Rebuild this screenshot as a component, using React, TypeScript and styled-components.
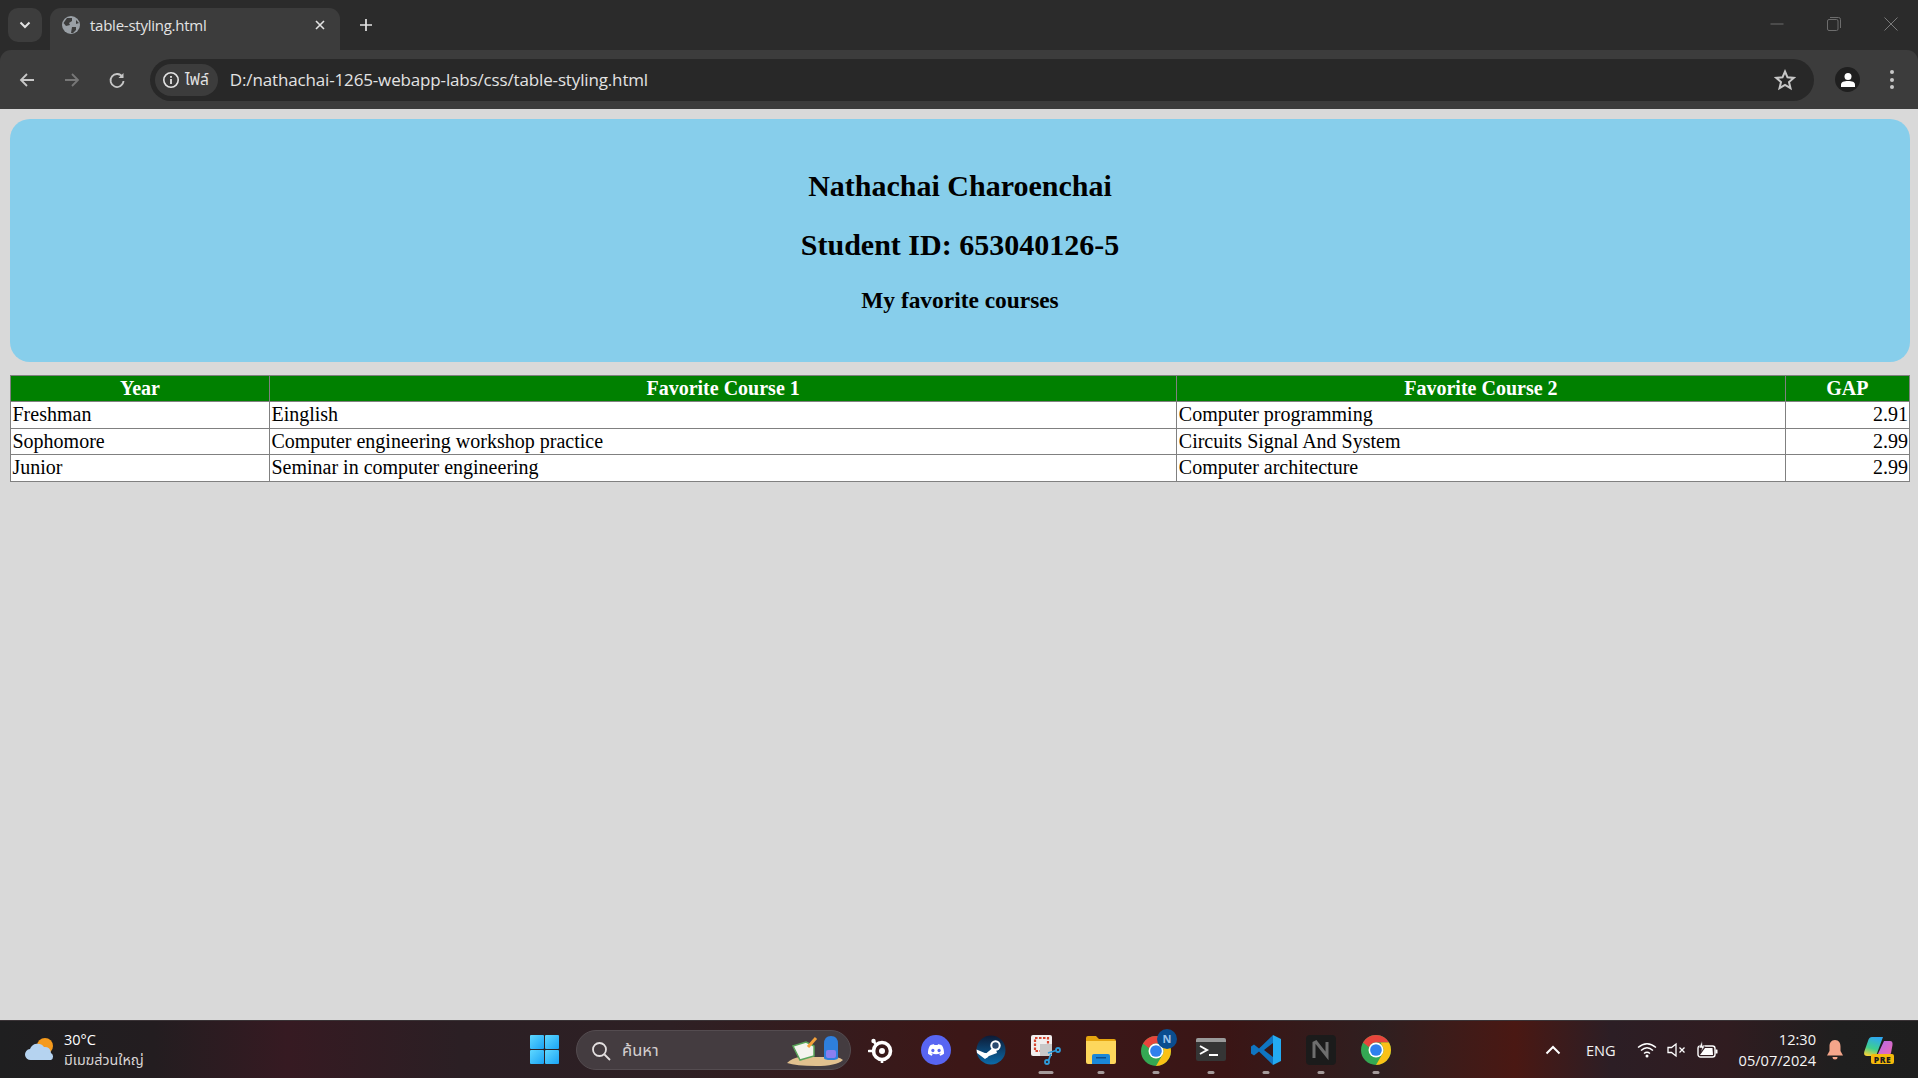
import React from "react";
import styled, { createGlobalStyle } from "styled-components";

const Global = createGlobalStyle`
  html, body { margin: 0; padding: 0; height: 100%; background: #d9d9d9; overflow: hidden; }
  #root { height: 100%; }
`;

const UI_FONT = `"Open Sans", "Noto Sans", "Noto Sans Thai", "DejaVu Sans", sans-serif`;

const Screen = styled.div`
  width: 1918px;
  height: 1078px;
  display: flex;
  flex-direction: column;
  font-family: ${UI_FONT};
  background: #2b2b2b;
`;

/* ---- browser chrome ---- */
const TabStrip = styled.div`
  height: 50px;
  flex: none;
  background: #2b2b2b;
  display: flex;
  align-items: flex-end;
  padding-left: 8px;
`;
const TabSearch = styled.div`
  width: 34px;
  height: 34px;
  margin-bottom: 8px;
  border-radius: 10px;
  background: #3d3d3d;
  display: flex;
  align-items: center;
  justify-content: center;
  flex: none;
`;
const Tab = styled.div`
  width: 290px;
  height: 42px;
  margin-left: 8px;
  background: #3c3c3c;
  border-radius: 11px 11px 0 0;
  display: flex;
  align-items: center;
  padding: 0 14px 8px 11px;
  box-sizing: border-box;
  color: #e3e3e3;
  font-size: 15px;
  letter-spacing: -0.25px;
  flex: none;
`;
const TabTitle = styled.span`
  margin-left: 9px;
  flex: 1;
`;
const NewTab = styled.div`
  margin: 0 0 9px 10px;
  height: 32px;
  width: 32px;
  display: flex;
  align-items: center;
  justify-content: center;
`;
const WindowControls = styled.div`
  margin-left: auto;
  align-self: flex-start;
  display: flex;
  align-items: center;
  height: 48px;
  padding-right: 20px;
  gap: 43px;
`;
const Toolbar = styled.div`
  height: 59px;
  flex: none;
  background: #3c3c3c;
  border-radius: 11px 11px 0 0;
  display: flex;
  align-items: center;
  padding: 0 0 0 16px;
  box-sizing: border-box;
`;
const NavGroup = styled.div`
  display: flex;
  gap: 23px;
  flex: none;
`;
const NavButton = styled.div`
  width: 22px;
  height: 22px;
  display: flex;
  align-items: center;
  justify-content: center;
  flex: none;
`;
const Omnibox = styled.div`
  margin: 0 0 0 22px;
  width: 1664px;
  height: 42px;
  flex: none;
  border-radius: 21px;
  background: #282828;
  display: flex;
  align-items: center;
  padding: 0 18px 0 5px;
  box-sizing: border-box;
`;
const SiteChip = styled.div`
  height: 32px;
  padding: 0 9px 0 7px;
  border-radius: 16px;
  background: #3c3c3c;
  display: flex;
  align-items: center;
  gap: 5px;
  color: #e3e3e3;
  font-size: 15.5px;
  flex: none;
`;
const Url = styled.div`
  margin-left: 12px;
  flex: 1;
  color: #e3e3e3;
  font-size: 17px;
  letter-spacing: -0.15px;
`;
const Avatar = styled.div`
  width: 25px;
  height: 25px;
  margin-left: 21px;
  border-radius: 50%;
  background: #1f1f1f;
  display: flex;
  align-items: center;
  justify-content: center;
  flex: none;
`;
const MenuDots = styled.div`
  margin-left: 30px;
  display: flex;
  flex-direction: column;
  gap: 3.5px;
  flex: none;
  i { width: 4px; height: 4px; border-radius: 50%; background: #c7c7c7; display: block; }
`;

/* ---- page ---- */
const Page = styled.main`
  flex: 1;
  background: #d9d9d9;
  padding: 10px 8px 0 10px;
  font-family: "Liberation Serif", "Times New Roman", serif;
  color: #000;
  min-height: 0;
`;
const Banner = styled.header`
  height: 243px;
  background: #87ceeb;
  border-radius: 20px;
  display: flex;
  flex-direction: column;
  align-items: center;
  margin-bottom: 13px;
`;
const Name = styled.h1<{ $top: number }>`
  margin: ${(p) => p.$top}px 0 0;
  font-size: 30px;
  line-height: 34px;
  font-weight: 700;
`;
const Sub = styled.h2`
  margin: 25px 0 0;
  font-size: 23.4px;
  line-height: 26px;
  font-weight: 700;
`;
const Table = styled.table`
  width: 100%;
  border-collapse: collapse;
  table-layout: fixed;
  font-size: 20px;
  background: #fff;
  border: 1px solid #808080;
`;
const Th = styled.th<{ $w: number }>`
  width: ${(p) => p.$w}px;
  background: #008000;
  color: #fff;
  border: 1px solid #808080;
  padding: 1px;
  height: 23px;
  line-height: 23px;
  font-weight: 700;
  box-sizing: content-box;
`;
const Tr = styled.tr`
  &:nth-child(odd) { height: 27px; }
  &:nth-child(even) { height: 26px; }
  &:nth-child(odd) td { vertical-align: top; }
`;
const Td = styled.td<{ $num?: boolean }>`
  border: 1px solid #808080;
  padding: 1px 1px 1px 1.5px;
  line-height: 23px;
  text-align: ${(p) => (p.$num ? "right" : "left")};
`;

/* ---- taskbar ---- */
const Taskbar = styled.footer`
  height: 58px;
  flex: none;
  border-top: 1px solid #3a3336;
  box-sizing: border-box;
  background: linear-gradient(90deg, #1f1f20 0%, #231d20 8%, #361a22 15%, #2b1f24 24%, #2e2024 35%, #3c1717 50%, #3a1718 58%, #3a1515 64%, #2f1f20 72%, #4a1813 79%, #2c1e25 84%, #301c20 90%, #1f1f1f 96%, #1e1e1e 100%);
  display: flex;
  align-items: center;
  color: #fff;
`;
const Weather = styled.div`
  width: 495px;
  flex: none;
  padding-left: 24px;
  box-sizing: border-box;
  display: flex;
  align-items: center;
  gap: 8px;
`;
const WeatherText = styled.div`
  font-size: 14.5px;
  line-height: 21px;
  color: #fff;
  small { display: block; font-size: 14.3px; color: #d8d4d4; line-height: 20px; }
`;
const StartIcon = styled.div`
  width: 29px;
  height: 29px;
  margin-left: 35px;
  display: grid;
  grid-template-columns: 1fr 1fr;
  gap: 1px;
  flex: none;
  i { display: block; background: linear-gradient(135deg, #5fd8ff, #1aa3f5); border-radius: 1px; }
`;
const SearchBox = styled.div`
  margin-left: 17px;
  width: 275px;
  height: 40px;
  flex: none;
  border-radius: 20px;
  background: #443c40;
  border: 1px solid #544c50;
  box-sizing: border-box;
  display: flex;
  align-items: center;
  padding: 2px 0 0 14px;
  color: #d5d0d0;
  font-size: 16.5px;
  gap: 11px;
  position: relative;
`;
const SearchArt = styled.svg`
  position: absolute;
  right: 6px;
  bottom: 2px;
`;
const Apps = styled.div`
  display: flex;
  margin-left: 2px;
  flex: none;
`;
const AppSlot = styled.div`
  width: 55px;
  height: 57px;
  display: flex;
  align-items: center;
  justify-content: center;
  position: relative;
  flex: none;
`;
const Running = styled.span<{ $wide?: boolean }>`
  position: absolute;
  bottom: 4px;
  left: 50%;
  transform: translateX(-50%);
  width: ${(p) => (p.$wide ? 15 : 7)}px;
  height: 3px;
  border-radius: 2px;
  background: #a49a9a;
`;
const Tray = styled.div`
  margin-left: 142px;
  display: flex;
  align-items: center;
  flex: none;
`;
const Lang = styled.span`
  margin-left: 25px;
  font-size: 14.6px;
  color: #f2f2f2;
  width: 41px;
`;
const TrayIcons = styled.div`
  margin-left: 10px;
  display: flex;
  align-items: center;
  gap: 10px;
`;
const Clock = styled.div`
  width: 97px;
  text-align: right;
  font-size: 14.6px;
  line-height: 21px;
  color: #f5f5f5;
`;
const BellWrap = styled.div`
  margin-left: 11px;
  display: flex;
`;
const CopilotWrap = styled.div`
  margin-left: 21px;
  display: flex;
`;

const GlobeIcon = () => (
  <svg width="20" height="20" viewBox="0 0 20 20">
    <circle cx="10" cy="10" r="9" fill="#9aa0a6" />
    <path d="M6 3 L11 3 L11 6 L8 8 L9 10 L5 11 L2.5 8 Z M11 12 L15 12 L15 15 L12 18 L10 18 Z M15 5 L18 8 L15 9 Z" fill="#3c3c3c" />
  </svg>
);

const ChromeArt = () => (
  <>
    <circle cx="24" cy="24" r="20" fill="#34a853" />
    <path d="M24 4a20 20 0 0 1 17.320 10H24a10 10 0 0 0-9.300 6.300L6.680 14A20 20 0 0 1 24 4z" fill="#e8453c" />
    <path d="M41.320 14A20 20 0 0 1 24 44l8.660-15A10 10 0 0 0 32.660 19L30 14z" fill="#fbc116" />
    <circle cx="24" cy="24" r="10" fill="#fff" />
    <circle cx="24" cy="24" r="7.800" fill="#2f80ed" />
  </>
);

const apps: { key: string; node: React.ReactNode; run?: boolean; wide?: boolean }[] = [
  {
    key: "steelseries",
    node: (
      <svg width="26" height="26" viewBox="0 0 26 26">
        <circle cx="14" cy="14" r="8.500" fill="none" stroke="#fff" strokeWidth="3.600" />
        <circle cx="14" cy="14" r="3" fill="#fff" />
        <circle cx="5.500" cy="4" r="2.200" fill="#fff" />
        <path d="M5.500 4 L9 9" stroke="#fff" strokeWidth="2.400" />
        <path d="M1 14 H6 M14 23 V26" stroke="#fff" strokeWidth="2.600" strokeLinecap="round" />
      </svg>
    ),
  },
  {
    key: "discord",
    node: (
      <svg width="30" height="30" viewBox="0 0 30 30">
        <circle cx="15" cy="15" r="15" fill="#5865f2" />
        <path d="M9 10.500c2-1 3.500-1.200 4-1.200l.4.800a10 10 0 0 1 3.200 0l.4-.800c.5 0 2 .2 4 1.200 1.400 2.400 2.200 5.200 2 8.200-1.300 1-2.600 1.600-3.800 2l-.9-1.400c.5-.2 1-.4 1.400-.7l-.3-.3c-2.700 1.200-5.900 1.200-8.800 0l-.3.300c.4.300.9.500 1.400.7l-.9 1.400c-1.200-.4-2.500-1-3.800-2-.2-3 .6-5.800 2-8.200z" fill="#fff" />
        <ellipse cx="11.900" cy="15.500" rx="1.600" ry="1.800" fill="#5865f2" />
        <ellipse cx="18.100" cy="15.500" rx="1.600" ry="1.800" fill="#5865f2" />
      </svg>
    ),
  },
  {
    key: "steam",
    node: (
      <svg width="30" height="30" viewBox="0 0 30 30">
        <defs>
          <linearGradient id="steamG" x1="0" y1="0" x2="0" y2="1">
            <stop offset="0" stopColor="#0d1b36" />
            <stop offset="1" stopColor="#0b6aa8" />
          </linearGradient>
        </defs>
        <circle cx="15" cy="15" r="14.500" fill="url(#steamG)" />
        <path d="M0.500 14.500 L10 18.500 L13 16 L19 11 L21 18 L13 21 L9 24 L1 18 Z" fill="#fff" />
        <circle cx="19.500" cy="10.500" r="5.200" fill="#fff" />
        <circle cx="19.500" cy="10.500" r="3.200" fill="#2a4a6f" />
        <circle cx="9.500" cy="20.500" r="2.500" fill="#fff" />
      </svg>
    ),
  },
  {
    key: "snip",
    run: true,
    wide: true,
    node: (
      <svg width="32" height="32" viewBox="0 0 32 32">
        <rect x="1" y="1" width="21" height="21" rx="2" fill="#f1efef" />
        <rect x="5" y="4" width="13" height="13" fill="none" stroke="#d6452f" strokeWidth="2.200" strokeDasharray="2.500 1.500" />
        <rect x="10" y="10" width="12" height="12" fill="#c8c8c8" />
        <circle cx="28" cy="16" r="2" fill="none" stroke="#2d9cdb" strokeWidth="1.800" />
        <circle cx="17" cy="28" r="2" fill="none" stroke="#2d9cdb" strokeWidth="1.800" />
        <path d="M18.500 26.500 L21 20 M26 16.500 L18 19" stroke="#2d9cdb" strokeWidth="1.800" />
      </svg>
    ),
  },
  {
    key: "files",
    run: true,
    node: (
      <svg width="30" height="28" viewBox="0 0 30 28">
        <path d="M0 2a2 2 0 0 1 2-2h8l3 3h15a2 2 0 0 1 2 2v3H0z" fill="#e5a50f" />
        <path d="M0 5h30v21a2 2 0 0 1-2 2H2a2 2 0 0 1-2-2z" fill="#fdd75c" />
        <path d="M6 28v-8a2 2 0 0 1 2-2h14a2 2 0 0 1 2 2v8z" fill="#1b88d8" />
        <rect x="10" y="21" width="10" height="1.500" fill="#0d4f8c" />
      </svg>
    ),
  },
  {
    key: "chrome-n",
    run: true,
    node: (
      <svg width="36" height="38" viewBox="0 0 36 38" style={{ overflow: "visible", marginTop: -6 }}>
        <svg x="3" y="8" width="30" height="30" viewBox="4 4 40 40">
          <ChromeArt />
        </svg>
        <circle cx="29" cy="11" r="10" fill="#0a4d8f" />
        <text x="29" y="15" textAnchor="middle" fontSize="11" fontWeight="700" fill="#9cc3ea" fontFamily="Open Sans, sans-serif">N</text>
      </svg>
    ),
  },
  {
    key: "terminal",
    run: true,
    node: (
      <svg width="30" height="23" viewBox="0 0 30 23">
        <rect width="30" height="23" rx="2" fill="#353535" />
        <path d="M0 2a2 2 0 0 1 2-2h26a2 2 0 0 1 2 2v2H0z" fill="#9a9a9a" />
        <path d="M4 8 L11 12 L4 16" fill="none" stroke="#fff" strokeWidth="2" />
        <rect x="13" y="16" width="9" height="2" fill="#fff" />
      </svg>
    ),
  },
  {
    key: "vscode",
    run: true,
    node: (
      <svg width="30" height="30" viewBox="0 0 30 30">
        <path d="M22 0 L30 4 V26 L22 30 Z" fill="#23aaf2" />
        <path d="M22 8 L13 15 L22 22 V30 L8 16.500 L3 20.500 L0 18.500 V11.500 L3 9.500 L8 13.500 L22 0 Z" fill="#0f75c2" />
      </svg>
    ),
  },
  {
    key: "notion",
    run: true,
    node: (
      <svg width="30" height="30" viewBox="0 0 30 30">
        <rect width="30" height="30" rx="4" fill="#1b1b1b" />
        <path d="M8 23 V8 L10 7 L21 21 V7" fill="none" stroke="#6e6e6e" strokeWidth="3" />
      </svg>
    ),
  },
  {
    key: "chrome",
    run: true,
    node: (
      <svg width="30" height="30" viewBox="4 4 40 40">
        <ChromeArt />
      </svg>
    ),
  },
];

const rows = [
  ["Freshman", "Einglish", "Computer programming", "2.91"],
  ["Sophomore", "Computer engineering workshop practice", "Circuits Signal And System", "2.99"],
  ["Junior", "Seminar in computer engineering", "Computer architecture", "2.99"],
];

export default function App() {
  return (
    <Screen>
      <Global />
      <TabStrip>
        <TabSearch>
          <svg width="12" height="8" viewBox="0 0 12 8">
            <path d="M1.500 1.500 L6 6 L10.500 1.500" fill="none" stroke="#e3e3e3" strokeWidth="2" />
          </svg>
        </TabSearch>
        <Tab>
          <GlobeIcon />
          <TabTitle>table-styling.html</TabTitle>
          <svg width="12" height="12" viewBox="0 0 12 12">
            <path d="M2 2 L10 10 M10 2 L2 10" stroke="#e3e3e3" strokeWidth="1.600" />
          </svg>
        </Tab>
        <NewTab>
          <svg width="14" height="14" viewBox="0 0 14 14">
            <path d="M7 1 V13 M1 7 H13" stroke="#e3e3e3" strokeWidth="1.700" />
          </svg>
        </NewTab>
        <WindowControls>
          <svg width="14" height="14" viewBox="0 0 14 14">
            <path d="M0.500 7 H13.500" stroke="#6d6d6d" strokeWidth="1" />
          </svg>
          <svg width="14" height="14" viewBox="0 0 14 14">
            <rect x="0.500" y="2.500" width="10.500" height="11" rx="1.500" fill="none" stroke="#6d6d6d" />
            <path d="M3 0.500 H11.500 A2 2 0 0 1 13.500 2.500 V11" fill="none" stroke="#6d6d6d" />
          </svg>
          <svg width="14" height="14" viewBox="0 0 14 14">
            <path d="M0.500 0.500 L13.500 13.500 M13.500 0.500 L0.500 13.500" stroke="#7a7a7a" strokeWidth="1" />
          </svg>
        </WindowControls>
      </TabStrip>
      <Toolbar>
        <NavGroup>
          <NavButton>
            <svg width="18" height="18" viewBox="0 0 18 18">
              <path d="M16 9 H3 M9 3 L3 9 L9 15" fill="none" stroke="#c7c7c7" strokeWidth="1.800" />
            </svg>
          </NavButton>
          <NavButton>
            <svg width="18" height="18" viewBox="0 0 18 18">
              <path d="M2 9 H15 M9 3 L15 9 L9 15" fill="none" stroke="#777" strokeWidth="1.800" />
            </svg>
          </NavButton>
          <NavButton>
            <svg width="18" height="18" viewBox="0 0 18 18">
              <path d="M14.500 6 A6.500 6.500 0 1 0 15.500 10" fill="none" stroke="#c7c7c7" strokeWidth="1.800" />
              <path d="M15.500 2 V7 H10.500 Z" fill="#c7c7c7" />
            </svg>
          </NavButton>
        </NavGroup>
        <Omnibox>
          <SiteChip>
            <svg width="18" height="18" viewBox="0 0 18 18">
              <circle cx="9" cy="9" r="7.200" fill="none" stroke="#e3e3e3" strokeWidth="1.600" />
              <rect x="8.100" y="8" width="1.800" height="5" fill="#e3e3e3" />
              <rect x="8.100" y="5" width="1.800" height="1.800" fill="#e3e3e3" />
            </svg>
            ไฟล์
          </SiteChip>
          <Url>D:/nathachai-1265-webapp-labs/css/table-styling.html</Url>
          <svg width="22" height="22" viewBox="0 0 22 22">
            <path d="M11 2.500 L13.500 8.300 L19.800 8.900 L15 13 L16.500 19.200 L11 16 L5.500 19.200 L7 13 L2.200 8.900 L8.500 8.300 Z" fill="none" stroke="#c7c7c7" strokeWidth="2" />
          </svg>
        </Omnibox>
        <Avatar>
          <svg width="16" height="16" viewBox="0 0 16 16">
            <circle cx="8" cy="4.500" r="3.500" fill="#fff" />
            <path d="M1 15 V12.500 C1 10 4 9 8 9 C12 9 15 10 15 12.500 V15 Z" fill="#fff" />
          </svg>
        </Avatar>
        <MenuDots>
          <i />
          <i />
          <i />
        </MenuDots>
      </Toolbar>
      <Page>
        <Banner>
          <Name $top={50}>Nathachai Charoenchai</Name>
          <Name $top={25}>Student ID: 653040126-5</Name>
          <Sub>My favorite courses</Sub>
        </Banner>
        <Table>
          <thead>
            <tr>
              <Th $w={255}>Year</Th>
              <Th $w={901}>Favorite Course 1</Th>
              <Th $w={603}>Favorite Course 2</Th>
              <Th $w={121}>GAP</Th>
            </tr>
          </thead>
          <tbody>
            {rows.map((r) => (
              <Tr key={r[0]}>
                <Td>{r[0]}</Td>
                <Td>{r[1]}</Td>
                <Td>{r[2]}</Td>
                <Td $num>{r[3]}</Td>
              </Tr>
            ))}
          </tbody>
        </Table>
      </Page>
      <Taskbar>
        <Weather>
          <svg width="32" height="28" viewBox="0 0 32 28">
            <circle cx="21" cy="10" r="8" fill="#f59a1c" />
            <path d="M7 24 a5.500 5.500 0 0 1 -1 -11 a8 8 0 0 1 14 -2 a6 6 0 0 1 7 6 a4 4 0 0 1 0 7 z" fill="#b5d3f0" />
          </svg>
          <WeatherText>
            30°C
            <small>มีเมฆส่วนใหญ่</small>
          </WeatherText>
        </Weather>
        <StartIcon>
          <i />
          <i />
          <i />
          <i />
        </StartIcon>
        <SearchBox>
          <svg width="20" height="20" viewBox="0 0 20 20">
            <circle cx="8.500" cy="8.500" r="6.500" fill="none" stroke="#e4e0e0" strokeWidth="1.800" />
            <path d="M13.500 13.500 L19 19" stroke="#e4e0e0" strokeWidth="1.800" />
          </svg>
          ค้นหา
          <SearchArt width="58" height="34" viewBox="0 0 58 34">
            <path d="M1 30 Q6 25 14 24 H50 Q55 25 57 27 Q50 33 30 33 Q10 33 1 30 Z" fill="#e2c18f" />
            <path d="M7 13 L20 9 L28 13 V23 L14 27 Z" fill="#f4f4ee" stroke="#5aa55a" strokeWidth="1.500" />
            <path d="M22 14 L30 5" stroke="#f4a13a" strokeWidth="3" />
            <path d="M38 25 V11 Q38 3 45 3 Q52 3 52 11 V25 Q52 27 45 27 Q38 27 38 25 Z" fill="#2e7fdc" />
            <rect x="40" y="17" width="10" height="8" rx="2" fill="#8a7ff0" />
          </SearchArt>
        </SearchBox>
        <Apps>
          {apps.map((a) => (
            <AppSlot key={a.key}>
              {a.node}
              {a.run && <Running $wide={a.wide} />}
            </AppSlot>
          ))}
        </Apps>
        <Tray>
          <svg width="16" height="10" viewBox="0 0 16 10">
            <path d="M1.500 8.500 L8 2 L14.500 8.500" fill="none" stroke="#fff" strokeWidth="2" />
          </svg>
          <Lang>ENG</Lang>
          <TrayIcons>
            <svg width="20" height="16" viewBox="0 0 20 16">
              <path d="M1 5.500 Q10 -2 19 5.500 M4 8.500 Q10 3 16 8.500 M7 11.500 Q10 9 13 11.500" fill="none" stroke="#fff" strokeWidth="1.400" />
              <circle cx="10" cy="14" r="1.500" fill="#fff" />
            </svg>
            <svg width="20" height="16" viewBox="0 0 20 16">
              <path d="M1 5.500 H4.500 L9 2 V14 L4.500 10.500 H1 Z" fill="none" stroke="#fff" strokeWidth="1.300" />
              <path d="M12.500 5.500 L17.500 10.500 M17.500 5.500 L12.500 10.500" stroke="#fff" strokeWidth="1.300" />
            </svg>
            <svg width="22" height="18" viewBox="0 0 22 18">
              <rect x="1" y="5" width="17" height="11" rx="2.500" fill="none" stroke="#fff" strokeWidth="1.400" />
              <rect x="18.500" y="8.500" width="2" height="4" rx="0.500" fill="#fff" />
              <path d="M3 14 L8 7 H15.500 L16 14 Z" fill="#fff" />
              <path d="M5 0 L2 7 H5 L4 11 L8 5 H5.500 Z" fill="#fff" stroke="#2c1e25" strokeWidth="0.500" />
            </svg>
          </TrayIcons>
          <Clock>
            12:30
            <br />
            05/07/2024
          </Clock>
          <BellWrap>
            <svg width="16" height="20" viewBox="0 0 16 20">
              <path d="M8 0 C12 0 13.500 3 13.500 6.500 V11 L16 15.500 H0 L2.500 11 V6.500 C2.500 3 4 0 8 0 Z" fill="#f4a58a" />
              <path d="M5.500 17 H10.500 A2.500 2.500 0 0 1 5.500 17 Z" fill="#f4a58a" />
            </svg>
          </BellWrap>
          <CopilotWrap>
            <svg width="30" height="28" viewBox="0 0 30 28">
              <defs>
                <linearGradient id="copA" x1="0.600" y1="0" x2="0.300" y2="1">
                  <stop offset="0" stopColor="#2ea8f0" />
                  <stop offset="0.600" stopColor="#3ecf8e" />
                  <stop offset="1" stopColor="#f2d33a" />
                </linearGradient>
                <linearGradient id="copB" x1="0" y1="0" x2="1" y2="1">
                  <stop offset="0" stopColor="#b06af0" />
                  <stop offset="1" stopColor="#f06ab0" />
                </linearGradient>
              </defs>
              <path d="M20 5 H26 Q29 5 28.500 9 L27 17 Q26 20 23 20 H13 Z" fill="url(#copB)" />
              <path d="M8 1 H19 L12 20 H3 Q-1 20 0.500 15 L4 5 Q5 1 8 1 Z" fill="url(#copA)" />
              <rect x="7" y="18" width="23" height="10" rx="2" fill="#f4b90b" />
              <text x="18.500" y="26.500" textAnchor="middle" fontSize="8.500" fontWeight="800" letterSpacing="0.500" fill="#1c1c1c" fontFamily="Open Sans, sans-serif">PRE</text>
            </svg>
          </CopilotWrap>
        </Tray>
      </Taskbar>
    </Screen>
  );
}
